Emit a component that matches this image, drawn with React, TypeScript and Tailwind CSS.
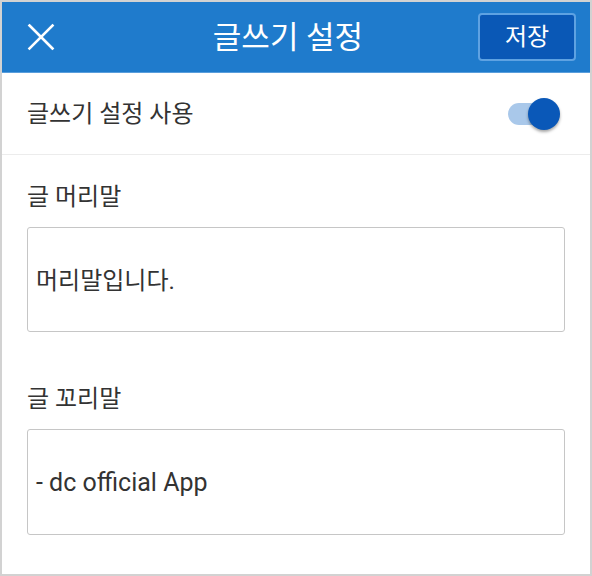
import React from "react";

export default function App() {
  const font = { fontFamily: "Roboto, 'Noto Sans CJK KR', sans-serif" };
  return (
    <div
      className="w-[592px] h-[576px] border-2 border-[#d2d2d2] bg-white flex flex-col text-[#333333]"
      style={font}
    >
      <div className="h-[70px] bg-[#1f7bcc] flex items-center justify-between pl-[25px] pr-[14px] relative shrink-0">
        <svg width="28" height="28" viewBox="0 0 28 28">
          <path d="M2.5 2.5 L25.5 25.5 M25.5 2.5 L2.5 25.5" stroke="white" strokeWidth="2.6" strokeLinecap="square" />
        </svg>
        <div className="absolute left-0 right-[16px] top-0 bottom-0 flex items-center justify-center pointer-events-none">
          <span className="text-white text-[31px] leading-none">글쓰기 설정</span>
        </div>
        <button className="w-[98px] h-[48px] rounded-[4px] bg-[#0a58b6] border-2 border-[#5ea2e2] text-white text-[24px] leading-none flex items-center justify-center">
          저장
        </button>
      </div>
      <div className="h-[1px] bg-[#5a9edc] shrink-0" />
      <div className="h-[82px] flex items-center justify-between pl-[25px] pr-[34px] border-b border-[#ececec] shrink-0">
        <span className="text-[24px] leading-none">글쓰기 설정 사용</span>
        <div className="relative w-[48px] h-[22px]">
          <div className="absolute inset-0 rounded-full bg-[#a9c8ea]" />
          <div className="absolute right-[-4px] top-[-5px] w-[32px] h-[32px] rounded-full bg-[#0a58b8] shadow-[0_2px_3px_rgba(0,0,0,0.35)]" />
        </div>
      </div>
      <div className="flex flex-col px-[25px] pt-[27px]">
        <div className="h-[30px] flex items-center text-[24px]">글 머리말</div>
        <div className="mt-[15px] h-[105px] border border-[#c6c6c6] rounded-[3px] flex items-center pl-[8px] pt-[2px] text-[24px]">
          머리말입니다.
        </div>
        <div className="mt-[52px] h-[30px] flex items-center text-[24px]">글 꼬리말</div>
        <div className="mt-[15px] h-[106px] border border-[#c6c6c6] rounded-[3px] flex items-center pl-[8px] pt-[2px] text-[25px]">
          - dc official App
        </div>
      </div>
    </div>
  );
}
